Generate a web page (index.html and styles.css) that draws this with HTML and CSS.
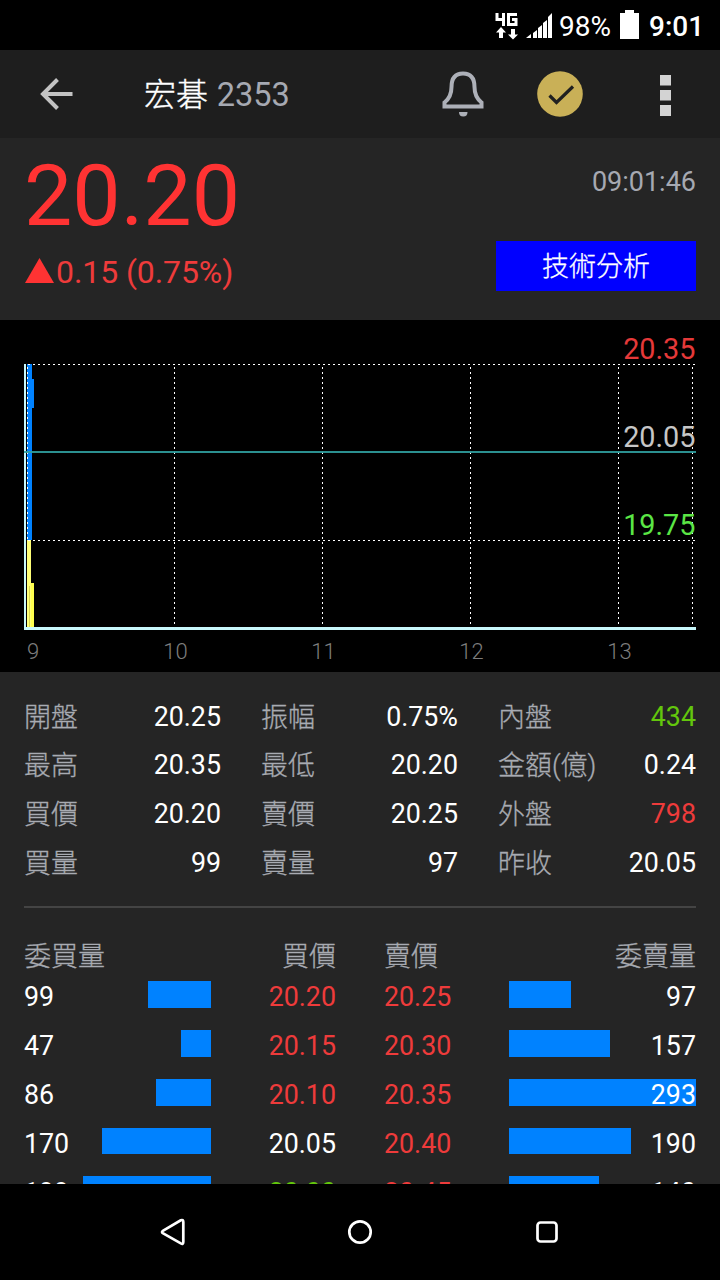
FILE: index.html
```html
<!DOCTYPE html>
<html lang="zh-Hant">
<head>
<meta charset="utf-8">
<title>宏碁 2353</title>
<link rel="stylesheet" href="styles.css">
</head>
<body>
<div class="screen">
  <div class="status">
    <svg class="network" width="58" height="50" viewBox="0 0 58 50">
      <g fill="none" stroke="#fff" stroke-width="3">
        <path d="M2 13v6.500h7M8.500 13v13"/>
        <path d="M22 14.500h-8.500v10h7.500v-5h-4"/>
      </g>
      <path fill="#fff" d="M6 27l5 5.500H8V38H4v-5.500H1zM18 39.500l-5-5h3V29h4v5.500h3z"/>
      <path fill="#fff" d="M31 38l5-4v4zM38 33l4-3v8h-4zM43 28l4-3v13h-4zM48 23l4-3v18h-4zM53 17l4-4v25h-4z"/>
    </svg>
    <span class="percent">98%</span>
    <svg class="battery" width="19" height="50" viewBox="0 0 19 50"><path fill="#fff" d="M5 10h9v3h5v26H0V13h5z"/></svg>
    <span class="clock">9:01</span>
  </div>

  <header class="appbar">
    <svg class="back" width="34" height="34" viewBox="0 0 34 34"><path d="M32.500 17H4M17.500 2.500L3 17l14.500 14.500" fill="none" stroke="#c3c3c3" stroke-width="4"/></svg>
    <h1 class="title">宏碁 <span class="code">2353</span></h1>
    <svg class="bell" width="44" height="48" viewBox="0 0 44 48">
      <path d="M3.500 36.500V32.500Q10.500 27 10.500 17Q10.500 3.500 22 3.500Q33.500 3.500 33.500 17Q33.500 27 40.500 32.500V36.500Z" fill="none" stroke="#adb0b8" stroke-width="4"/>
      <path d="M18 42h8.500q0 4.500-4.250 4.500T18 42z" fill="#adb0b8"/>
    </svg>
    <svg class="check" width="46" height="46" viewBox="0 0 46 46"><circle cx="23" cy="23" r="22.800" fill="#c9b057"/><path d="M12.500 24.500l7 7L36 15.500" fill="none" stroke="#202020" stroke-width="3.200"/></svg>
    <svg class="more" width="11" height="42" viewBox="0 0 11 42"><path fill="#d3d3d3" d="M0 1h11v10.500H0zM0 16h11v10.500H0zM0 31h11v11H0z"/></svg>
  </header>

  <section class="quote">
    <div>
      <div class="price">20.20</div>
      <div class="change"><svg width="29" height="25" viewBox="0 0 29 25"><path d="M14.500 0L29 25H0z" fill="#ff3333"/></svg><span>0.15 (0.75%)</span></div>
    </div>
    <div class="quote-side">
      <div class="time">09:01:46</div>
      <button class="analysis">技術分析</button>
    </div>
  </section>

  <svg class="chart" width="720" height="352" viewBox="0 0 720 352">
    <path class="solid" fill="#0082ff" d="M27 44h5v15h2v29h-2v132h-5z"/>
    <path class="solid" fill="#ffff77" d="M27 220h4v43h3v45h-7z"/>
    <path class="solid" fill="#ffff4d" d="M31 263h3v45h-3z"/>
    <path class="solid" fill="#d6d64f" d="M29 266h1v42h-1z"/>
    <rect class="solid" x="24" y="44" width="2" height="264" fill="#c8f8fc"/>
    <g class="grid">
      <path d="M28 44.500H696M28 220.500H696"/>
      <path d="M27.500 47V220M174.500 47V305M322.500 47V305M470.500 47V305M618.500 47V305M692.500 47V305"/>
    </g>
    <rect class="solid" x="24" y="131" width="672" height="2" fill="#30a0a0" opacity=".9"/>
    <rect class="solid" x="24" y="307" width="672" height="3" fill="#c8f8fc"/>
    <g class="level" text-anchor="end">
      <text x="695.500" y="39" fill="#e53939">20.35</text>
      <text x="695.500" y="127" fill="#c6c6c6">20.05</text>
      <text x="695.500" y="215" fill="#5be645">19.75</text>
    </g>
    <g class="hour" text-anchor="middle">
      <text x="33" y="339">9</text><text x="175.500" y="339">10</text><text x="323.500" y="339">11</text><text x="471.500" y="339">12</text><text x="619.500" y="339">13</text>
    </g>
  </svg>

  <main class="details">
    <dl class="stats">
      <div><dt>開盤</dt><dd>20.25</dd></div><div><dt>振幅</dt><dd>0.75%</dd></div><div><dt>內盤</dt><dd class="green">434</dd></div>
      <div><dt>最高</dt><dd>20.35</dd></div><div><dt>最低</dt><dd>20.20</dd></div><div><dt>金額(億)</dt><dd>0.24</dd></div>
      <div><dt>買價</dt><dd>20.20</dd></div><div><dt>賣價</dt><dd>20.25</dd></div><div><dt>外盤</dt><dd class="red">798</dd></div>
      <div><dt>買量</dt><dd>99</dd></div><div><dt>賣量</dt><dd>97</dd></div><div><dt>昨收</dt><dd>20.05</dd></div>
    </dl>

    <div class="depth">
      <div class="heads"><span>委買量</span><span>買價</span><span class="ask">賣價</span><span>委賣量</span></div>
      <div class="level-row">
        <div class="vol bid"><i style="width:63px"></i><b>99</b></div><span class="cost red">20.20</span>
        <span class="cost ask red">20.25</span><div class="vol offer"><i style="width:62px"></i><b>97</b></div>
      </div>
      <div class="level-row">
        <div class="vol bid"><i style="width:30px"></i><b>47</b></div><span class="cost red">20.15</span>
        <span class="cost ask red">20.30</span><div class="vol offer"><i style="width:101px"></i><b>157</b></div>
      </div>
      <div class="level-row">
        <div class="vol bid"><i style="width:55px"></i><b>86</b></div><span class="cost red">20.10</span>
        <span class="cost ask red">20.35</span><div class="vol offer"><i style="width:187px"></i><b>293</b></div>
      </div>
      <div class="level-row short">
        <div class="vol bid"><i style="width:109px"></i><b>170</b></div><span class="cost">20.05</span>
        <span class="cost ask red">20.40</span><div class="vol offer"><i style="width:122px"></i><b>190</b></div>
      </div>
      <div class="level-row last">
        <div class="vol bid"><i style="width:128px"></i><b>199</b></div><span class="cost green">20.00</span>
        <span class="cost ask red">20.45</span><div class="vol offer"><i style="width:90px"></i><b>140</b></div>
      </div>
    </div>
  </main>

  <nav class="navbar">
    <svg width="28" height="28" viewBox="0 0 28 28"><path d="M4.200 12.600L21.800 2.300Q24.300 1.300 24.300 4V24Q24.300 26.700 21.800 25.400L4.200 15.400Q1.800 14 4.200 12.600z"/></svg>
    <svg width="28" height="28" viewBox="0 0 28 28"><circle cx="14" cy="14" r="10.700"/></svg>
    <svg width="28" height="28" viewBox="0 0 28 28"><rect x="4.500" y="4.500" width="19" height="19" rx="3"/></svg>
  </nav>
</div>
</body>
</html>
```
FILE: styles.css
```css
* { box-sizing: border-box; }
body { margin: 0; background: #000; color: #fff; font-family: Roboto, "Noto Sans CJK TC", sans-serif; }
svg { display: block; flex: none; }
.screen { width: 720px; height: 1280px; display: flex; flex-direction: column; overflow: hidden; }

.status { height: 50px; display: flex; justify-content: flex-end; align-items: center; padding-right: 18px; line-height: 50px; }
.network { margin-right: 6px; }
.percent { font-size: 28px; width: 52px; margin-right: 9px; padding-top: 4px; }
.battery { margin-right: 10px; }
.clock { width: 53px; font-size: 28px; font-weight: 500; padding-top: 4px; }

.appbar { height: 88px; background: #1e1e1e; display: flex; align-items: center; padding: 0 49px 0 40px; }
.title { margin: 0 0 0 70px; font-size: 32px; line-height: 48px; font-weight: 300; flex: 1; padding-top: 1px; -webkit-text-stroke: 0.350px #fff; }
.code { color: #a6a9b2; font-weight: 400; font-size: 32.500px; -webkit-text-stroke: 0; margin-left: 1px; }
.bell { margin-right: 52px; }
.check { margin-right: 77px; }
.more { margin-top: 2px; }

.quote { height: 182px; background: #252525; display: flex; justify-content: space-between; padding: 0 24px; }
.price { color: #ff3333; font-size: 86px; line-height: 100px; margin-top: 8px; }
.change { display: flex; align-items: center; color: #ee3b3b; font-size: 32px; line-height: 40px; margin-top: 6px; padding-left: 1px; }
.change svg { margin: 0 2px 4px 0; }
.change span { letter-spacing: -0.08px; }
.quote-side { display: flex; flex-direction: column; align-items: flex-end; }
.time { color: #a6a9b2; font-size: 27px; line-height: 32px; margin-top: 28px; }
.analysis { margin-top: 43px; width: 200px; height: 50px; padding: 2px 0 0; border: 0; background: #0000ff; color: #fff; font: 300 27px/48px Roboto, "Noto Sans CJK TC", sans-serif; -webkit-text-stroke: 0.300px #fff; }

.chart { background: #000; }
.grid path { fill: none; stroke: #fff; stroke-width: 1; stroke-dasharray: 2 3; shape-rendering: crispEdges; }
.solid { shape-rendering: crispEdges; }
.level { font-size: 28.800px; }
.hour { font-size: 22px; font-weight: 300; fill: #7d7d7d; }

.details { height: 512px; background: #252525; padding: 21px 24px 0; overflow: hidden; font-size: 26.800px; }
.stats { margin: 0; display: grid; grid-template-columns: 197px 197px 198px; column-gap: 40px; grid-template-rows: 48px 49px 49px 49px; height: 215px; border-bottom: 2px solid #444; }
.stats div { display: flex; justify-content: space-between; line-height: 49px; }
dt { color: #a8abb2; font-size: 27px; font-weight: 300; -webkit-text-stroke: 0.300px #a8abb2; padding-top: 1px; }
dd { margin: 0; }
.red { color: #ee3b3b; }
.green { color: #63c60c; }

.heads, .level-row { display: grid; grid-template-columns: 187px 125px 125px 187px; }
.heads { padding-top: 27px; height: 73px; line-height: 44px; color: #a8abb2; font-size: 27px; font-weight: 300; -webkit-text-stroke: 0.300px #a8abb2; }
.heads span { text-align: right; }
.heads span:first-child { text-align: left; }
.heads .ask, .cost.ask { text-align: left; }
.heads .ask, .cost.ask { margin-left: 48px; margin-right: -48px; }
.heads span:last-child, .vol.offer { margin-left: 48px; margin-right: -48px; }
.level-row { height: 49px; line-height: 33px; }
.level-row.short { height: 48px; }
.level-row.last { line-height: 35px; }
.cost { text-align: right; }
.vol { display: grid; }
.vol > * { grid-area: 1 / 1; }
.vol i { height: 27px; background: #0082ff; }
.short .vol i { height: 26px; }
.vol b { font-weight: 400; }
.bid i { justify-self: end; }
.offer b { text-align: right; }

.navbar { height: 96px; display: flex; justify-content: space-between; align-items: center; padding: 0 159px; }
.navbar svg { fill: none; stroke: #fff; stroke-width: 2.700; }
```
